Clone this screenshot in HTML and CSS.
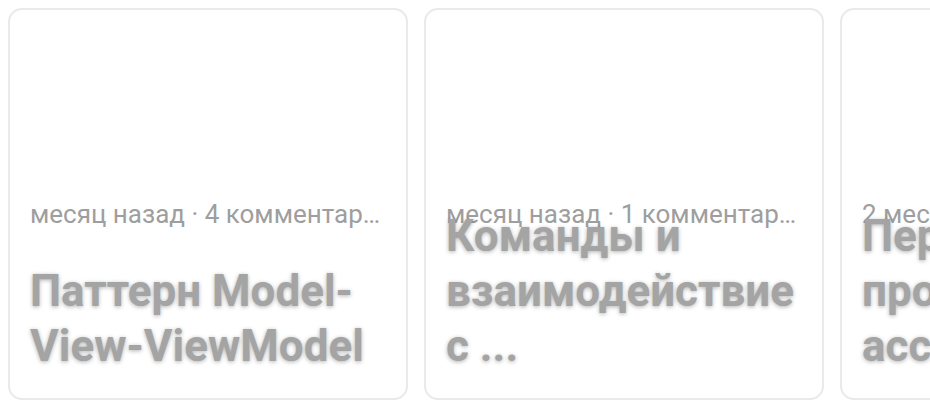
FILE: index.html
```html
<!DOCTYPE html>
<html lang="ru">
<head>
<meta charset="utf-8">
<title>Статьи</title>
<link rel="stylesheet" href="styles.css">
</head>
<body>
<div class="feed">
  <article class="card">
    <div class="meta">месяц назад · 4 комментария</div>
    <div class="title-box">
      <h2 class="title">Паттерн Model-View-ViewModel</h2>
    </div>
  </article>
  <article class="card">
    <div class="meta">месяц назад · 1 комментарий</div>
    <div class="title-box">
      <h2 class="title">Команды и взаимодействие с ...</h2>
    </div>
  </article>
  <article class="card">
    <div class="meta">2 месяца назад · 3 комментария</div>
    <div class="title-box">
      <h2 class="title">Перемещение проекта ассистента</h2>
    </div>
  </article>
</div>
</body>
</html>
```

FILE: styles.css
```css
html, body {
  margin: 0;
  padding: 0;
  background: #ffffff;
}

body {
  width: 930px;
  height: 400px;
  overflow: hidden;
  font-family: Roboto, "Noto Sans", sans-serif;
}

.feed {
  display: flex;
  gap: 16px;
  padding: 8px 0 0 8px;
}

.card {
  flex: 0 0 400px;
  width: 400px;
  min-width: 0;
  box-sizing: border-box;
  height: 392px;
  border: 2px solid #e9e9ee;
  border-radius: 14px;
  padding: 0 20px 24px;
  display: flex;
  flex-direction: column;
  justify-content: flex-end;
  background: #ffffff;
}

.meta {
  font-size: 26px;
  line-height: 32px;
  color: #9e9e9e;
  white-space: nowrap;
  overflow: hidden;
  text-overflow: ellipsis;
  margin-bottom: 34px;
}

/* the title box keeps two lines of height; longer titles grow upwards */
.title-box {
  height: 110px;
  display: flex;
  flex-direction: column;
  justify-content: flex-end;
}

.title {
  margin: 0;
  font-size: 44px;
  line-height: 55px;
  font-weight: 700;
  color: #a4a4a4;
  text-shadow: 0 1px 4px rgba(0, 0, 0, 0.3);
}
```
